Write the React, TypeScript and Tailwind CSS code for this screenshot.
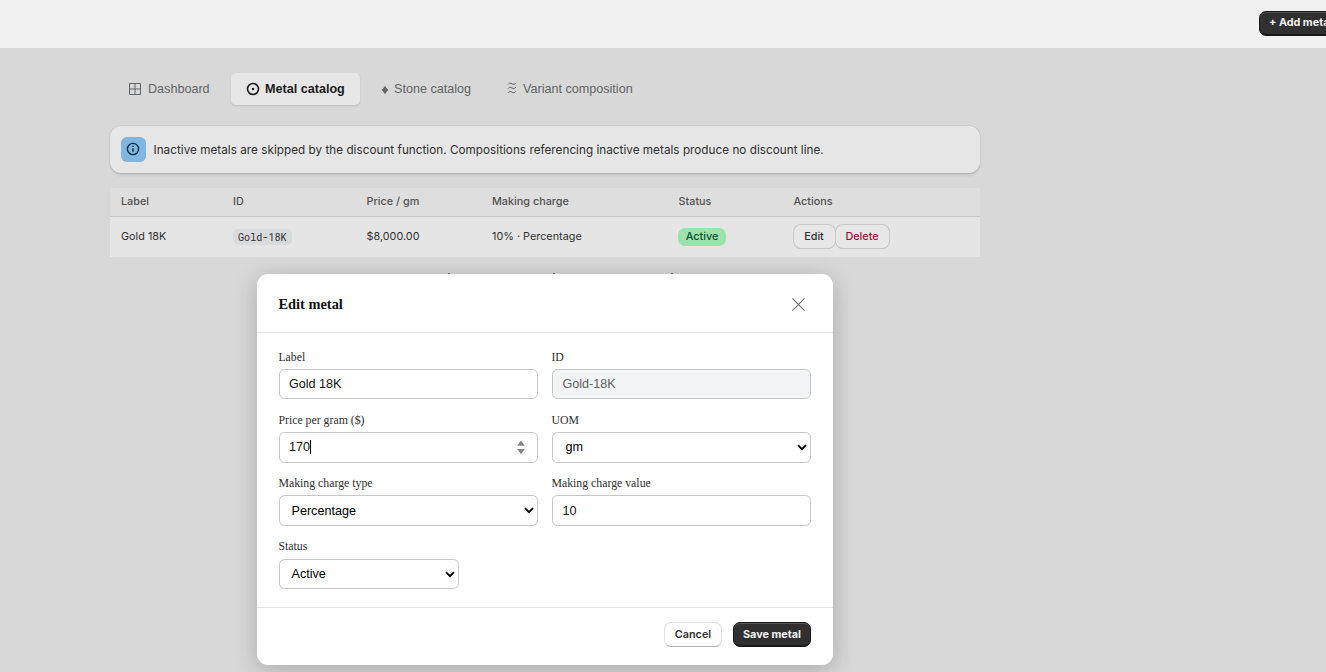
import type { ReactNode } from 'react';

const inter = "font-['Inter',sans-serif]";
const arial = "font-['Liberation_Sans',sans-serif]";
const columns = 'grid grid-cols-[112px_133.5px_125.5px_186.5px_115px_1fr] items-center pl-[11px] text-[10.8px] tracking-[0.02px]';

function DashboardIcon() {
  return (
    <svg width="12" height="12" viewBox="0 0 12 12" fill="none" stroke="currentColor">
      <path d="M.5.5h11v11H.5zM6 .5v11M.5 6h11" />
    </svg>
  );
}

function MetalIcon() {
  return (
    <svg width="14" height="14" viewBox="0 0 14 14" fill="none">
      <circle cx="7" cy="7" r="5.5" stroke="currentColor" strokeWidth="1.6" />
      <circle cx="7" cy="7" r="1.2" fill="currentColor" />
    </svg>
  );
}

function StoneIcon() {
  return (
    <svg width="8" height="10" viewBox="0 0 8 10" fill="currentColor" className="relative top-px">
      <path d="M4 .8C4.8 2.300 5.900 3.600 7.400 5 5.900 6.400 4.800 7.700 4 9.200 3.200 7.700 2.100 6.400.6 5 2.100 3.600 3.200 2.300 4 .8Z" />
    </svg>
  );
}

function VariantIcon() {
  return (
    <svg width="10" height="12" viewBox="0 0 10 12" fill="none" stroke="currentColor" className="relative -top-px">
      <path d="M1 2.400C2.300.6 3.500 1 5 1.800S7.800 2.600 9 .8M1 6.600C2.300 4.800 3.500 5.200 5 6S7.800 6.800 9 5M1 10.800C2.300 9 3.500 9.400 5 10.200S7.800 11 9 9.200" />
    </svg>
  );
}

function Chevron() {
  return (
    <svg width="10" height="7" viewBox="0 0 10 7" fill="none" stroke="#000" strokeWidth="1.9">
      <path d="M1 1.200 5 5.200 9 1.200" />
    </svg>
  );
}

function Spinner() {
  return (
    <svg width="8" height="15" viewBox="0 0 8 15" fill="#858585">
      <path d="M4 .5 7.800 5.800H.2zM4 14.200.2 8.900h7.600z" />
    </svg>
  );
}

function Field({ label, className, children }: { label: string; className: string; children: ReactNode }) {
  return (
    <div>
      <div className="-ml-[0.6px] h-[19px] whitespace-nowrap font-['Liberation_Serif',serif] text-[11.8px] leading-[15px] text-[#303030]">
        {label}
      </div>
      <div
        className={`${arial} ${className} flex items-center justify-between rounded-[5.5px] border border-[#c4c6c8] text-[12.6px] leading-[15px]`}
      >
        {children}
      </div>
    </div>
  );
}

export default function App() {
  return (
    <div className={`${inter} relative h-[672px] w-[1326px] overflow-hidden bg-[#d8d8d8] text-[11.7px] text-[#303030]`}>
      <header className="flex h-12 bg-[#f1f1f1] pl-[1259px] pt-[11px]">
        <button className="h-[25px] w-[84px] shrink-0 whitespace-nowrap rounded-[7px] border border-[#181818] bg-[#303030] pb-[2px] pl-[9px] text-left text-[10.8px] font-bold leading-[20px] text-[#f3f3f3] shadow-[inset_0_1px_0_#555,inset_0_-1px_0_#181818]">
          + Add metal
        </button>
      </header>

      <main className="ml-[110px] w-[870px] pt-[25px]">
        <nav className={`${arial} flex h-[32px] items-center text-[12.6px] text-[#626466]`}>
          <div className="flex w-[121px] items-center gap-[7px] pl-[19px]">
            <DashboardIcon />
            <span>Dashboard</span>
          </div>
          <div className="flex h-[32px] w-[129px] items-center gap-[5px] rounded-[5px] bg-[#e6e6e6] pl-[15px] font-bold text-[#1c1c1c] shadow-[0_1px_2px_rgba(0,0,0,0.12)]">
            <MetalIcon />
            <span>Metal catalog</span>
          </div>
          <div className="flex w-[137px] items-center gap-[5px] pl-[21px]">
            <StoneIcon />
            <span>Stone catalog</span>
          </div>
          <div className="flex items-center gap-[6px] pl-[10px]">
            <VariantIcon />
            <span>Variant composition</span>
          </div>
        </nav>

        <div className="mt-[21px] flex h-[47px] items-center gap-[7.5px] rounded-[11px] bg-[#e6e6e6] pl-[11px] shadow-[0_1px_1px_#aeb0af,0_0_0_0.5px_#c2c2c2,0_3px_3px_rgba(0,0,0,0.05)]">
          <div className="flex h-[25px] w-[25px] items-center justify-center rounded-[6px] bg-[#80b6e0] pb-px pr-px text-[#082d43]">
            <svg width="14" height="14" viewBox="0 0 14 14" fill="none" stroke="currentColor" strokeWidth="1.4">
              <circle cx="7" cy="7" r="5.600" />
              <path d="M7 6.300v3.500M7 3.800v1.300" />
            </svg>
          </div>
          <span className="whitespace-nowrap pt-[2px] tracking-[0.037px]">
            Inactive metals are skipped by the discount function. Compositions referencing inactive metals produce no
            discount line.
          </span>
        </div>

        <section className="mt-[15px]">
          <div className={`${columns} h-[29px] border-b border-[#c7c7c7] bg-[#dedede] pt-px font-medium text-[#525252]`}>
            <span>Label</span>
            <span>ID</span>
            <span>Price / gm</span>
            <span>Making charge</span>
            <span>Status</span>
            <span>Actions</span>
          </div>
          <div className={`${columns} h-10 bg-[#e5e5e5]`}>
            <span>Gold 18K</span>
            <span className="flex">
              <span className="h-[16px] rounded-[5px] bg-[#d9dadb] px-[5px] font-['Roboto_Mono','DejaVu_Sans_Mono',monospace] text-[10.1px] leading-[16px]">
                Gold-18K
              </span>
            </span>
            <span>$8,000.00</span>
            <span>10% · Percentage</span>
            <span className="flex">
              <span className="-ml-[0.5px] h-[18px] w-[48px] rounded-[7px] bg-[#9de2ad] text-center font-medium leading-[18px] text-[#0c5132]">
                Active
              </span>
            </span>
            <div className="-mt-px flex gap-px font-medium">
              <button className="h-[23px] w-[41px] rounded-[7px] bg-[#e7e7e7] pt-px shadow-[0_0_0_1px_#c8c8c8,0_1px_0_0_#b0b0b0]">
                Edit
              </button>
              <button className="h-[23px] w-[53px] rounded-[7px] bg-[#e7e7e7] pt-px text-[#8e1737] shadow-[0_0_0_1px_#c8c8c8,0_1px_0_0_#b0b0b0]">
                Delete
              </button>
            </div>
          </div>
        </section>

        {/* tips of the footer line that show above the dialog */}
        <div className="flex h-px pl-[338px] pt-[16px]">
          <span className="mr-[103px] h-px w-[2px] shrink-0 bg-[#777]" />
          <span className="mr-[116px] h-px w-[2px] shrink-0 bg-[#777]" />
          <span className="h-px w-[2px] shrink-0 bg-[#777]" />
        </div>
      </main>

      {/* dialog sits above the page */}
      <div className="absolute left-[257px] top-[274px] flex h-[391px] w-[576px] flex-col rounded-[11px] bg-white shadow-[0_5px_24px_rgba(0,0,0,0.22)]">
        <div className="flex h-[59px] items-center justify-between border-b border-[#e3e3e3] pl-[21.5px] pr-[28px] pt-[2px]">
          <h2 className="pt-px font-['Liberation_Serif',serif] text-[14.4px] font-bold text-[#111]">Edit metal</h2>
          <svg width="13" height="13" viewBox="0 0 13 13" stroke="#707070" strokeWidth="1.2">
            <path d="m.4.4 12.200 12.200M12.600.4.400 12.600" />
          </svg>
        </div>

        <div className="grid h-[274px] grid-cols-[259px_259px] content-start gap-x-[14px] gap-y-[13px] pl-[22px] pt-[17px]">
          <Field label="Label" className="mb-px h-[30px] bg-white pl-[9px] text-[#111]">
            <span>Gold 18K</span>
          </Field>
          <Field label="ID" className="mb-px h-[30px] bg-[#f1f3f4] pl-[9.5px] text-[#616161]">
            <span>Gold-18K</span>
          </Field>
          <Field label="Price per gram ($)" className="h-[31px] pl-[9px] pr-[12px] text-[#111]">
            <span className="-mt-px flex items-center">
              170
              <span className="h-[14px] w-px bg-black" />
            </span>
            <Spinner />
          </Field>
          <Field label="UOM" className="h-[31px] pl-[12.5px] pr-[3px] text-black">
            <span>gm</span>
            <Chevron />
          </Field>
          <Field label="Making charge type" className="h-[31px] pl-[11.5px] pr-[3px] text-black">
            <span className="pt-px">Percentage</span>
            <Chevron />
          </Field>
          <Field label="Making charge value" className="h-[31px] pl-[9.5px] text-[#111]">
            <span className="pt-px">10</span>
          </Field>
          <Field label="Status" className="mt-[20px] h-[30px] w-[180px] -translate-y-[19px] pl-[11.5px] pr-[3px] text-black">
            <span>Active</span>
            <Chevron />
          </Field>
        </div>

        <div className="flex h-[58px] items-start justify-end gap-[11px] border-t border-[#e3e3e3] pr-[22px] pt-[14px] text-[10.8px]">
          <button className="h-[25px] w-[58px] rounded-[7px] border border-[#e1e1e1] border-b-[#b5b5b5] bg-white pt-px font-semibold">
            Cancel
          </button>
          <button className="h-[25px] w-[78px] rounded-[7px] border border-[#181818] bg-[#303030] pt-px font-bold text-[#f3f3f3] shadow-[inset_0_1px_0_#555,inset_0_-1px_0_#181818]">
            Save metal
          </button>
        </div>
      </div>
    </div>
  );
}
